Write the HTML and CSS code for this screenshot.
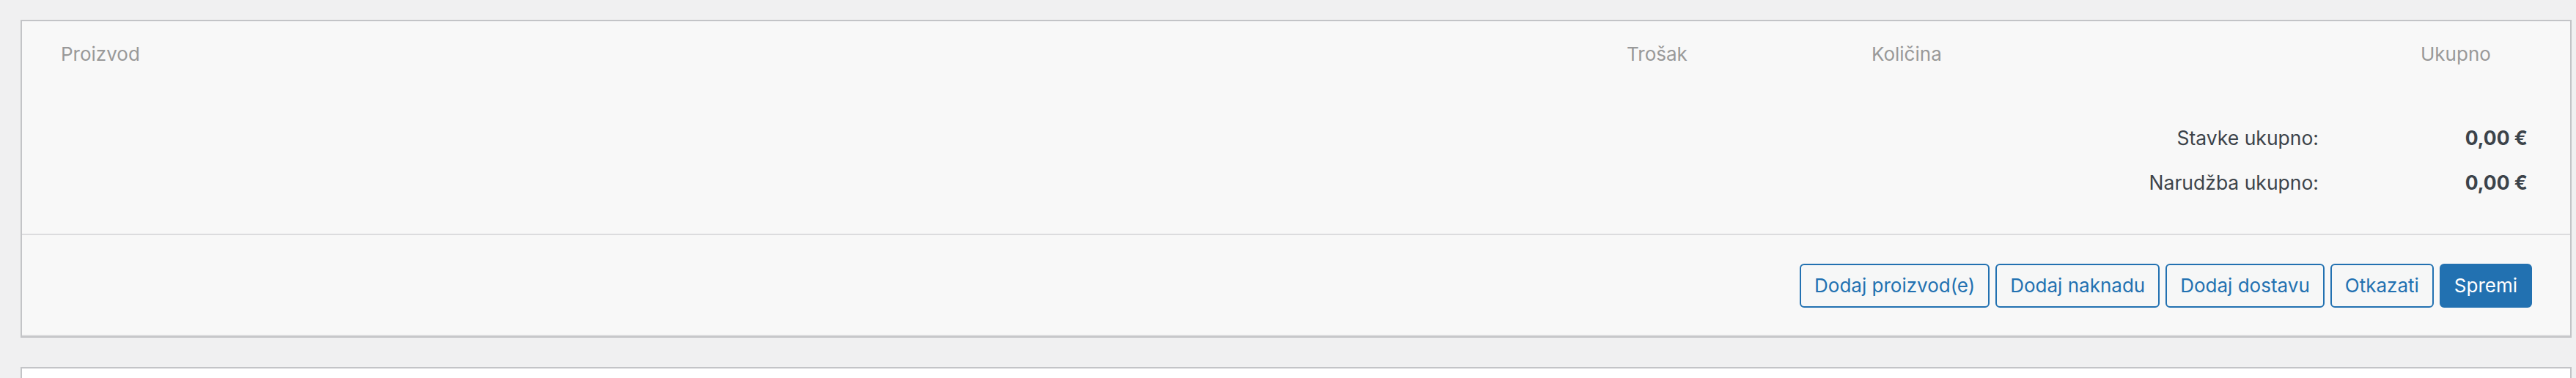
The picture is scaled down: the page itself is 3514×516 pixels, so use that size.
FILE: index.html
```html
<!DOCTYPE html>
<html lang="hr">
<head>
<meta charset="utf-8">
<title>Stavke narudžbe</title>
<link rel="stylesheet" href="styles.css">
</head>
<body>
<div class="page">
  <section class="postbox">
    <div class="items">
      <div class="items-head">
        <div class="th">Proizvod</div>
        <div class="th">Trošak</div>
        <div class="th">Količina</div>
        <div class="th">Ukupno</div>
      </div>
      <div class="totals">
        <div class="label">Stavke ukupno:</div>
        <div class="value">0,00 €</div>
        <div class="label">Narudžba ukupno:</div>
        <div class="value">0,00 €</div>
      </div>
    </div>
    <div class="actions">
      <button class="btn">Dodaj proizvod(e)</button>
      <button class="btn">Dodaj naknadu</button>
      <button class="btn">Dodaj dostavu</button>
      <button class="btn">Otkazati</button>
      <button class="btn btn-primary">Spremi</button>
    </div>
  </section>
  <section class="postbox next"></section>
</div>
</body>
</html>
```
FILE: styles.css
```css
* { box-sizing: border-box; }
html, body { margin: 0; padding: 0; }
body {
  background: #f0f0f1;
  font-family: Inter, "Noto Sans", sans-serif;
  font-size: 26px;
  color: #3c434a;
  overflow: hidden;
}
.page {
  padding: 27px 6px 0 28px;
  display: flex;
  flex-direction: column;
  gap: 40px;
}
.postbox {
  border: 2px solid #c3c4c7;
  background: #f8f8f8;
}
.items {
  border-bottom: 2px solid #dcdcde;
  padding: 25px 0 39px;
}
.items-head {
  display: grid;
  grid-template-columns: 2136px 334px 749px 1fr;
  padding-left: 53px;
  line-height: 40px;
  color: #999;
}
.totals {
  margin-top: 64px;
  display: grid;
  grid-template-columns: 1fr 285px;
  padding-right: 58px;
  line-height: 61px;
  font-size: 26.5px;
}
.label { text-align: right; }
.value { text-align: right; font-weight: 700; }
.actions {
  display: flex;
  justify-content: flex-end;
  gap: 8px;
  padding: 39px 52px 37px 0;
  border-bottom: 2px solid #dcdcde;
  background: #f8f8f8;
}
.btn {
  font: inherit;
  font-size: 26px;
  line-height: 56px;
  height: 60px;
  padding: 0 18px;
  border: 2px solid #2271b1;
  border-radius: 6px;
  background: #f6f7f7;
  color: #2271b1;
}
.btn-primary {
  background: #2271b1;
  color: #fff;
}
.postbox.next {
  background: #fff;
  border-bottom: none;
  height: 100px;
}
```
